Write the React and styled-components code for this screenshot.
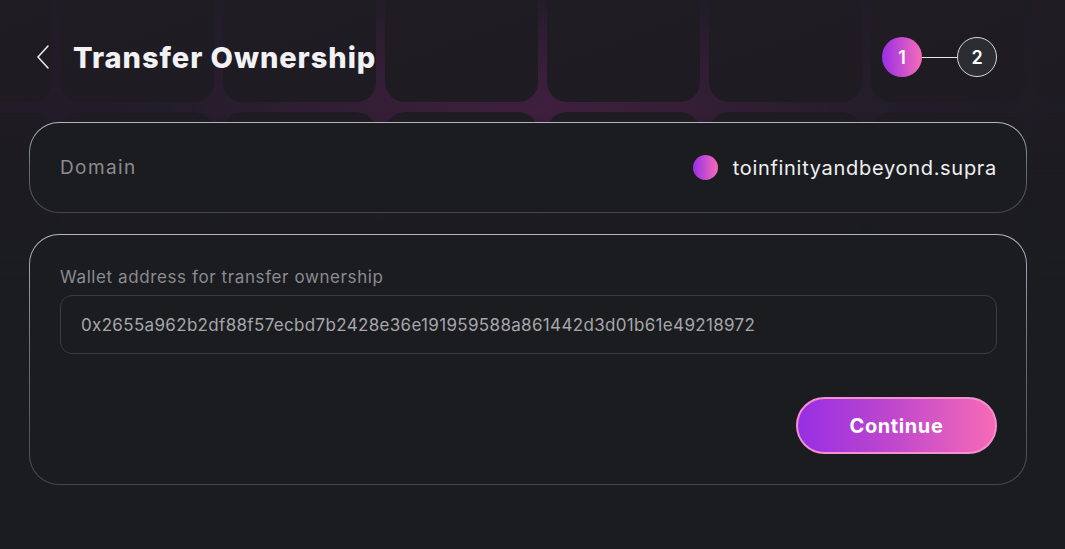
import React from "react";
import styled, { createGlobalStyle } from "styled-components";

const Global = createGlobalStyle`
  html, body { margin: 0; padding: 0; background: #1b1c20; }
  body { font-family: Inter, "Open Sans", sans-serif; }
  * { box-sizing: border-box; }
`;

const Page = styled.div`
  position: relative;
  width: 1065px;
  height: 549px;
  overflow: hidden;
  background: #1b1c20;
`;

const Backdrop = styled.div`
  position: absolute;
  inset: 0;
  pointer-events: none;
  background:
    radial-gradient(ellipse 380px 110px at 540px 108px, rgba(105, 35, 90, 0.36), rgba(80, 30, 90, 0) 100%),
    radial-gradient(ellipse 800px 180px at 480px 80px, rgba(60, 32, 70, 0.45), rgba(40, 30, 50, 0) 100%);
  -webkit-mask-image: linear-gradient(to bottom, #000 0px, #000 110px, rgba(0,0,0,0.35) 200px, transparent 280px);
  mask-image: linear-gradient(to bottom, #000 0px, #000 110px, rgba(0,0,0,0.35) 200px, transparent 280px);
`;

const TileGrid = styled.div`
  position: absolute;
  left: -101px;
  top: -51px;
  display: grid;
  grid-template-columns: repeat(8, 153px);
  grid-auto-rows: 153px;
  gap: 10px 9px;
`;

const Tile = styled.div`
  border-radius: 20px;
  background: linear-gradient(160deg, #1f1c23, #1e1b22);
`;

const Content = styled.div`
  position: relative;
  padding: 29px 38px 0 29px;
  display: flex;
  flex-direction: column;
`;

const Header = styled.div`
  height: 56px;
  display: flex;
  align-items: center;
  padding: 0 30px 0 7px;
  margin-bottom: 37px;
`;

const BackButton = styled.button`
  background: none;
  border: none;
  padding: 0;
  width: 14px;
  height: 24px;
  display: flex;
  align-items: center;
  justify-content: center;
  cursor: pointer;
  margin-right: 23px;
`;

const Title = styled.h1`
  margin: 0;
  font-family: Inter, sans-serif;
  font-weight: 800;
  font-size: 29px;
  color: #f2f2f4;
  letter-spacing: 0.95px;
  flex: 1;
`;

const Stepper = styled.div`
  display: flex;
  align-items: center;
`;

const Step = styled.div`
  width: 40px;
  height: 40px;
  border-radius: 50%;
  display: flex;
  align-items: center;
  justify-content: center;
  font-family: Inter, sans-serif;
  font-weight: 600;
  font-size: 18px;
  color: #ffffff;
  background: ${(p) => (p.$active ? "linear-gradient(90deg, #9a2fe6, #f66cb6)" : "#2b2d32")};
  border: ${(p) => (p.$active ? "none" : "1px solid #d8d8dc")};
`;

const StepLine = styled.div`
  width: 35px;
  height: 1px;
  background: #e6e6e8;
`;

const Card = styled.div`
  border: 1px solid transparent;
  border-radius: 30px;
  background:
    linear-gradient(#1b1c20, #1b1c20) padding-box,
    linear-gradient(to bottom, #b1b5c4 0%, #6e7079 45%, #45464c 100%) border-box;
`;

const DomainCard = styled(Card)`
  height: 91px;
  display: flex;
  align-items: center;
  justify-content: space-between;
  padding: 0 29px 0 30px;
  margin-bottom: 21px;
`;

const Label = styled.span`
  font-family: Inter, sans-serif;
  font-size: 19px;
  letter-spacing: 1.4px;
  color: #8b8b90;
`;

const DomainValue = styled.div`
  display: flex;
  align-items: center;
  gap: 15px;
  font-family: Inter, sans-serif;
  font-size: 20px;
  letter-spacing: 0.7px;
  color: #f0f0f2;
`;

const Dot = styled.span`
  width: 25px;
  height: 25px;
  border-radius: 50%;
  background: linear-gradient(90deg, #9a2fe6, #f66cb6);
`;

const FormCard = styled(Card)`
  height: 251px;
  padding: 30px 29px 30px 30px;
  display: flex;
  flex-direction: column;
`;

const FieldLabel = styled.label`
  font-family: Inter, sans-serif;
  font-size: 17px;
  line-height: 24px;
  letter-spacing: 0.6px;
  color: #8b8b90;
  margin-bottom: 6px;
`;

const Input = styled.input`
  height: 59px;
  border: 1px solid #3b3c41;
  border-radius: 12px;
  background: #1b1c20;
  padding: 0 20px;
  font-family: Inter, sans-serif;
  font-size: 17px;
  letter-spacing: 0.33px;
  color: #a6a6ab;
  caret-color: #e0e0e0;
  outline: none;
`;

const Actions = styled.div`
  margin-top: auto;
  display: flex;
  justify-content: flex-end;
`;

const PrimaryButton = styled.button`
  width: 201px;
  height: 57px;
  border-radius: 29px;
  border: 2px solid #f490cf;
  background: linear-gradient(90deg, #972ee4 0%, #c149cc 50%, #f76ab6 100%);
  font-family: Inter, sans-serif;
  font-weight: 700;
  font-size: 20px;
  letter-spacing: 0.6px;
  color: #ffffff;
  cursor: pointer;
`;

const ChevronLeft = () => (
  <svg width="12" height="24" viewBox="0 0 12 24" fill="none">
    <polyline points="11,1 1,12 11,23" stroke="#e8e8ea" strokeWidth="1.6" strokeLinecap="round" strokeLinejoin="round" />
  </svg>
);

export default function App() {
  const tiles = Array.from({ length: 24 });
  return (
    <>
      <Global />
      <Page>
        <Backdrop>
          <TileGrid>
            {tiles.map((_, i) => (
              <Tile key={i} />
            ))}
          </TileGrid>
        </Backdrop>
        <Content>
          <Header>
            <BackButton aria-label="Back">
              <ChevronLeft />
            </BackButton>
            <Title>Transfer Ownership</Title>
            <Stepper>
              <Step $active>1</Step>
              <StepLine />
              <Step>2</Step>
            </Stepper>
          </Header>
          <DomainCard>
            <Label>Domain</Label>
            <DomainValue>
              <Dot />
              toinfinityandbeyond.supra
            </DomainValue>
          </DomainCard>
          <FormCard>
            <FieldLabel>Wallet address for transfer ownership</FieldLabel>
            <Input defaultValue="0x2655a962b2df88f57ecbd7b2428e36e191959588a861442d3d01b61e49218972" />
            <Actions>
              <PrimaryButton>Continue</PrimaryButton>
            </Actions>
          </FormCard>
        </Content>
      </Page>
    </>
  );
}
